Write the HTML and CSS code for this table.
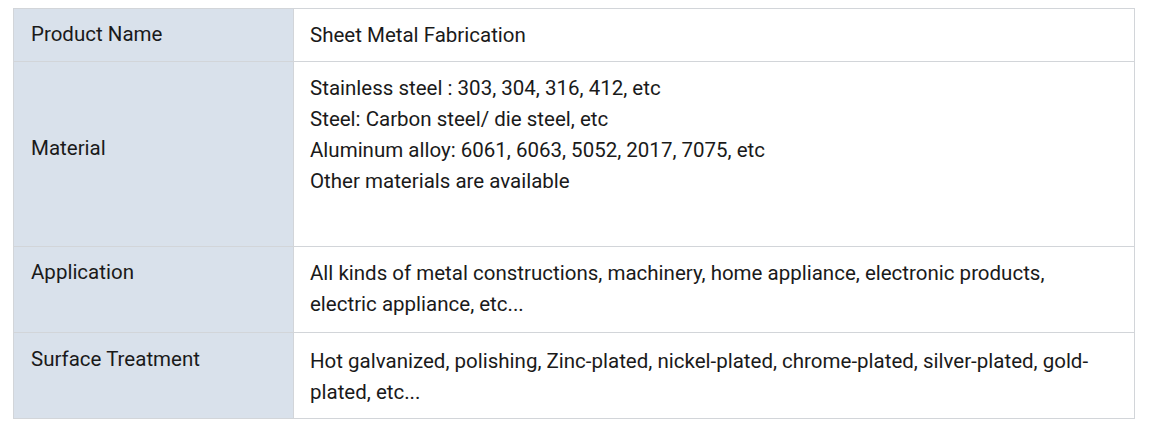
FILE: index.html
```html
<!DOCTYPE html>
<html lang="en">
<head>
<meta charset="utf-8">
<title>Sheet Metal Fabrication</title>
<link rel="stylesheet" href="styles.css">
</head>
<body>
<div class="wrap">
  <table class="spec">
    <tbody>
      <tr>
        <th class="label">Product Name</th>
        <td class="value">Sheet Metal Fabrication</td>
      </tr>
      <tr>
        <th class="label label-mid">Material</th>
        <td class="value value-tall">
          <p class="line">Stainless steel : 303, 304, 316, 412, etc</p>
          <p class="line">Steel: Carbon steel/ die steel, etc</p>
          <p class="line">Aluminum alloy: 6061, 6063, 5052, 2017, 7075, etc</p>
          <p class="line">Other materials are available</p>
        </td>
      </tr>
      <tr>
        <th class="label">Application</th>
        <td class="value value-wrap">All kinds of metal constructions, machinery, home appliance, electronic products, electric appliance, etc...</td>
      </tr>
      <tr>
        <th class="label label-low">Surface Treatment</th>
        <td class="value value-wrap value-low">Hot galvanized, polishing, Zinc-plated, nickel-plated, chrome-plated, silver-plated, gold-plated, etc...</td>
      </tr>
    </tbody>
  </table>
</div>
</body>
</html>
```

FILE: styles.css
```css
html, body {
  margin: 0;
  padding: 0;
  background: #ffffff;
}

.wrap {
  padding: 8px 25px 0 13px;
}

.spec {
  width: 1122px;
  border-collapse: collapse;
  table-layout: fixed;
  font-family: Roboto, "Liberation Sans", Arial, sans-serif;
  font-size: 20.5px;
  line-height: 31px;
  color: #1a1a1a;
}

.label {
  width: 280px;
  box-sizing: border-box;
  background: #d9e1eb;
  border: 1px solid #d2d5d9;
  padding: 10px 18px 11px 17px;
  text-align: left;
  font-weight: 400;
  vertical-align: top;
}

.label-mid {
  vertical-align: middle;
  padding-bottom: 22px;
}

.label-low {
  padding-top: 11px;
}

.value {
  background: #ffffff;
  border: 1px solid #d2d5d9;
  padding: 11px 40px 10px 16px;
  vertical-align: top;
}

.value-tall {
  padding-bottom: 49px;
}

.value-wrap {
  padding-bottom: 12px;
}

.value-low {
  padding-top: 13px;
  padding-bottom: 10px;
}

.line {
  margin: 0;
}
```
